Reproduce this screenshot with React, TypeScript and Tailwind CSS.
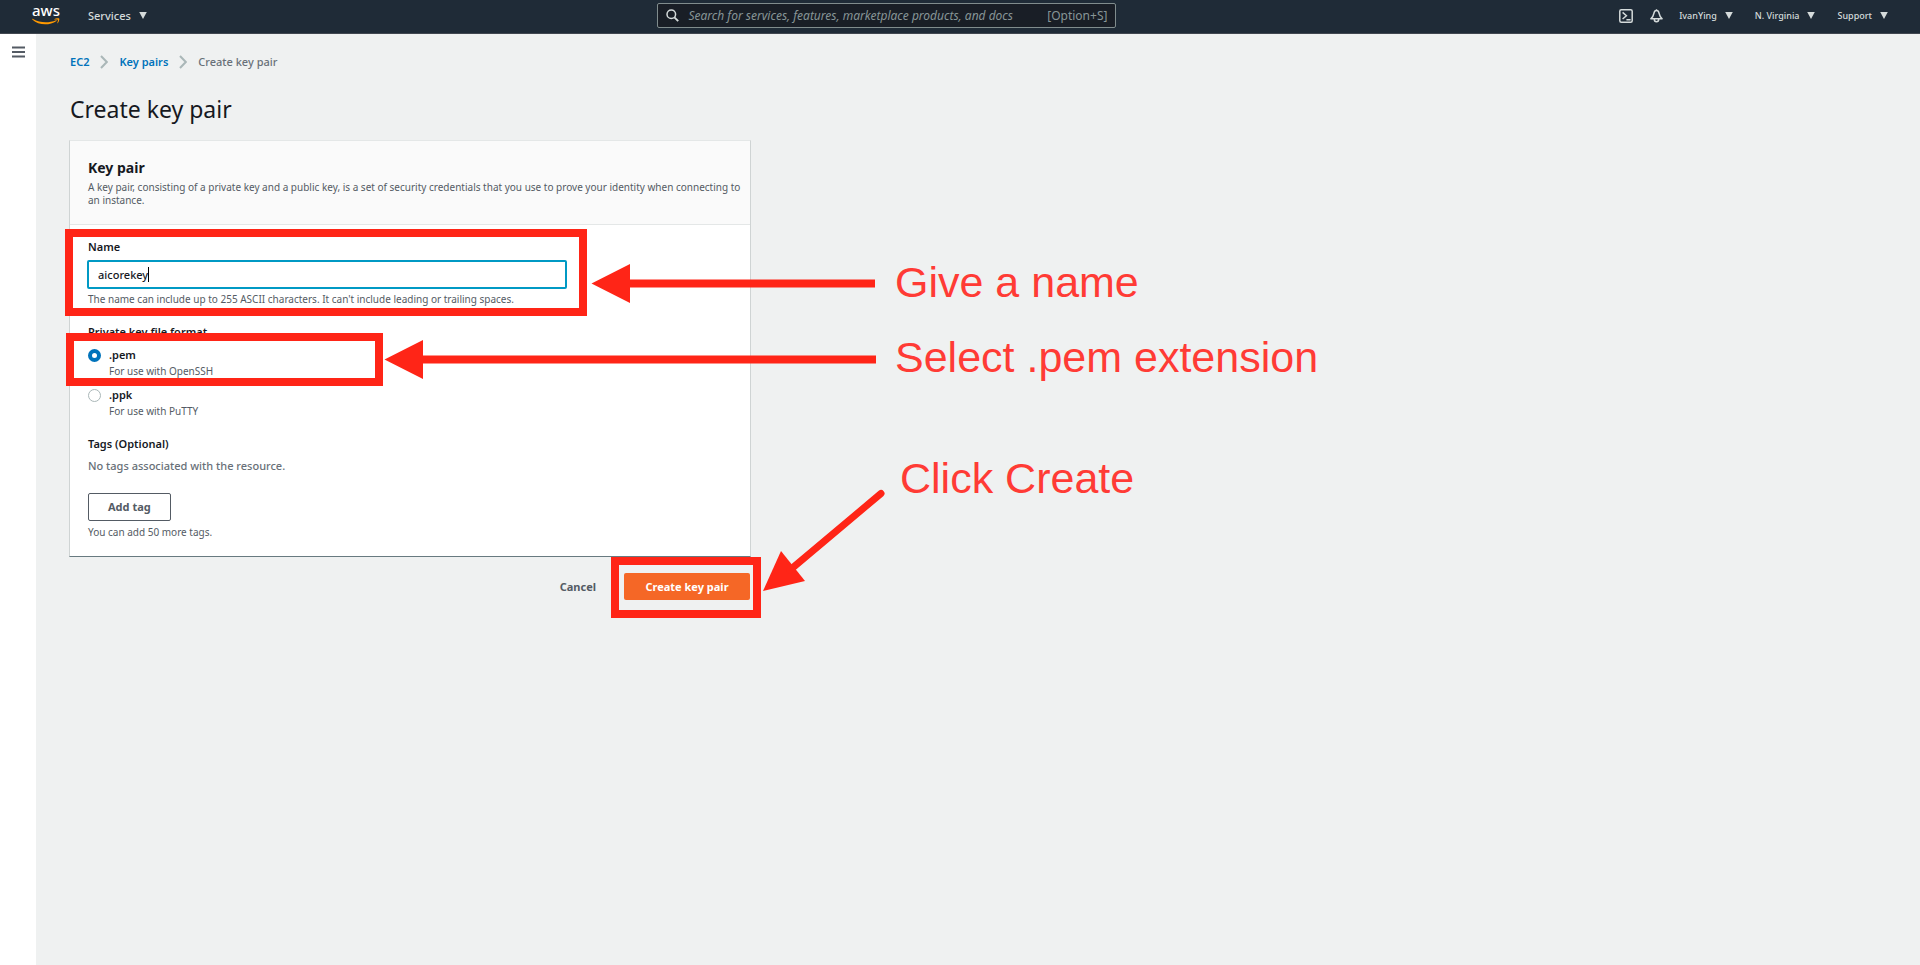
import { useState } from 'react';
import type { ReactNode } from 'react';

function Caret() {
  return (
    <svg width="8" height="7" viewBox="0 0 8 7" aria-hidden="true" className="shrink-0">
      <path d="M0.2 0H7.8L4 7Z" fill="currentColor" />
    </svg>
  );
}

function NavItem({ children }: { children: ReactNode }) {
  return (
    <button type="button" className="flex items-center gap-2 text-[9px] leading-4 font-medium">
      {children}
      <Caret />
    </button>
  );
}

function AwsLogo() {
  return (
    <span className="flex w-7 flex-col items-center text-white">
      <span className="-mt-1.5 text-[15px] leading-4 font-medium">aws</span>
      <svg width="28" height="7" viewBox="0 0 28 7" aria-hidden="true" fill="#f90">
        <path d="M0.3 1.1C0.4 0.8 0.7 0.8 1 1C7.8 4.9 16.5 5.4 24 2.2C24.6 2 25 2.5 24.5 2.9C17.5 7.8 6.5 7.4 0.5 1.7C0.3 1.5 0.2 1.3 0.3 1.1Z" />
        <path d="M22.3 1.3C23.7 0.2 26.7 0.1 27.2 0.6C27.7 1.2 27 4 25.7 5.2C25.4 5.4 25.2 5.3 25.3 5C25.7 4 26.2 2.3 25.8 1.8C25.4 1.4 23.6 1.5 22.6 1.6C22.2 1.7 22.1 1.5 22.3 1.3Z" />
      </svg>
    </span>
  );
}

function Header() {
  return (
    <header className="grid h-[34px] grid-cols-[9fr_459px_11fr] border-b border-[#414750] bg-[#1f2b37] text-[#d5dbdb]">
      <div className="flex items-center gap-7 pl-8">
        <a href="#home" aria-label="AWS home">
          <AwsLogo />
        </a>
        <button type="button" className="flex items-center gap-2 pb-0.5 text-[11px] leading-4 font-medium">
          Services
          <Caret />
        </button>
      </div>
      <div className="flex items-center pb-0.5">
        <label className="flex h-[25px] w-full items-center gap-[9px] rounded-xs border border-[#808c8d] bg-[#191e26] px-2">
          <svg width="13" height="13" viewBox="0 0 13 13" fill="none" stroke="#d5dbdb" strokeWidth="1.5" aria-hidden="true">
            <circle cx="5.3" cy="5.3" r="4.3" />
            <path d="M8.4 8.4L12.2 12.2" strokeWidth="1.9" />
          </svg>
          <input
            type="search"
            aria-label="Search"
            placeholder="Search for services, features, marketplace products, and docs"
            className="min-w-0 flex-1 bg-transparent text-[12px] leading-4 text-[#d5dbdb] outline-none placeholder:text-[#879596] placeholder:italic"
          />
          <span className="text-[12px] leading-4 text-[#879596]">[Option+S]</span>
        </label>
      </div>
      <div className="flex items-center justify-end pr-8 pb-0.5">
        <div className="flex items-center gap-[17px]">
          <button type="button" aria-label="CloudShell">
            <svg width="14" height="14" viewBox="0 0 14 14" fill="none" stroke="currentColor" strokeWidth="1.5" aria-hidden="true">
              <rect x="0.8" y="0.8" width="12.4" height="12.4" rx="1.5" />
              <path d="M3.6 3.4L7.4 6.7L3.6 10M7.4 10.8H11.6" />
            </svg>
          </button>
          <button type="button" aria-label="Notifications">
            <svg width="13" height="14" viewBox="0 0 13 14" fill="none" stroke="currentColor" strokeWidth="1.5" strokeLinejoin="round" aria-hidden="true">
              <path d="M6.5 0.2V1.8M6.5 1.6C5 1.6 4.2 2.7 3.9 4.4C3.5 6.6 2.6 8.2 0.9 9.8H12.1C10.4 8.2 9.5 6.6 9.1 4.4C8.8 2.7 8 1.6 6.5 1.6ZM4.3 10.3C4.3 13.7 8.7 13.7 8.7 10.3" />
            </svg>
          </button>
        </div>
        <nav aria-label="Account" className="flex items-center gap-[22px] pl-4">
          <NavItem>IvanYing</NavItem>
          <NavItem>N. Virginia</NavItem>
          <NavItem>Support</NavItem>
        </nav>
      </div>
    </header>
  );
}

function Chevron() {
  return (
    <svg width="8" height="14" viewBox="0 0 8 14" fill="none" stroke="#aab7b8" strokeWidth="2" aria-hidden="true">
      <path d="M1 1L6.8 7L1 13" />
    </svg>
  );
}

function RadioOption({
  value,
  hint,
  selected,
  onSelect,
}: {
  value: string;
  hint: string;
  selected: string;
  onSelect: (v: string) => void;
}) {
  return (
    <label className="flex gap-2">
      <input
        type="radio"
        name="format"
        value={value}
        checked={selected === value}
        onChange={() => onSelect(value)}
        className="mt-0.5 size-[13px] appearance-none rounded-full border border-[#aab7b8] bg-white checked:border-4 checked:border-[#0073bb]"
      />
      <span className="flex flex-col">
        <span className="text-[11px] leading-4 font-semibold">{value}</span>
        <span className="text-[10px] leading-4 text-[#545b64]">{hint}</span>
      </span>
    </label>
  );
}

function Annotations() {
  return (
    <div className="pointer-events-none absolute inset-0 overflow-hidden font-['Liberation_Sans',Arial,sans-serif] text-[43px] leading-[50px] whitespace-nowrap text-[#ff3b35]">
      <div className="absolute top-[229px] left-[65px] h-[87px] w-[522px] border-8 border-[#ff2517]" />
      <div className="absolute top-[333px] left-[66px] h-[53px] w-[317px] border-8 border-[#ff2517]" />
      <div className="absolute top-[557px] left-[611px] h-[61px] w-[150px] border-8 border-[#ff2517]" />
      <svg width="900" height="640" viewBox="0 0 900 640" fill="#ff2517" className="absolute top-0 left-0" aria-hidden="true">
        <path d="M591.5 283.5L630 264V279.5H875V287.5H630V303Z" />
        <path d="M384.5 359.5L423 340V355.5H876V363.5H423V379Z" />
        <path d="M763 591L781 551L805 581Z" />
        <path d="M790 570L881 493.5" stroke="#ff2517" strokeWidth="7" strokeLinecap="round" />
      </svg>
      <p className="absolute top-[257px] left-[895px]">Give a name</p>
      <p className="absolute top-[332px] left-[895px]">Select .pem extension</p>
      <p className="absolute top-[453px] left-[900px]">Click Create</p>
    </div>
  );
}

export default function App() {
  const [name, setName] = useState('aicorekey');
  const [format, setFormat] = useState('.pem');

  return (
    <div className="relative flex min-h-screen flex-col bg-[#eff1f1] font-['Noto_Sans','Open_Sans',sans-serif] text-[#16191f]">
      <Header />
      <div className="flex flex-1">
        <aside className="w-9 bg-white pt-3 pl-3">
          <button type="button" aria-label="Open navigation" className="block">
            <svg width="13" height="12" viewBox="0 0 13 12" stroke="#545b64" strokeWidth="1.8" aria-hidden="true">
              <path d="M0 1.5H13M0 6H13M0 10.5H13" />
            </svg>
          </button>
        </aside>
        <main className="flex-1 pt-5 pl-[34px]">
          <nav aria-label="Breadcrumb" className="flex items-center gap-[11px] text-[11px] leading-4 font-semibold">
            <a href="#ec2" className="text-[#0073bb]">EC2</a>
            <Chevron />
            <a href="#key-pairs" className="text-[#0073bb]">Key pairs</a>
            <Chevron />
            <span className="font-medium text-[#687078]">Create key pair</span>
          </nav>
          <h1 className="mt-[23px] text-[23px] leading-8">Create key pair</h1>
          <form className="mt-[15px] w-[681px]" onSubmit={(e) => e.preventDefault()}>
            <section className="-ml-px border-x border-t border-b border-x-[#cfd4d4] border-t-[#e4e7e7] border-b-[#687a80] bg-white">
              <div className="border-b border-[#e4e7e7] bg-[#fafafa] pt-[17px] pr-2 pb-[17px] pl-[18px]">
                <h2 className="text-[14px] leading-5 font-bold">Key pair</h2>
                <p className="mt-[3px] text-[10px] leading-[13px] text-[#545b64]">
                  A key pair, consisting of a private key and a public key, is a set of security credentials that you use to prove your identity when connecting to an instance.
                </p>
              </div>
              <div className="px-[18px] pt-[14px] pb-4">
                <label htmlFor="key-name" className="block text-[11px] leading-4 font-semibold">Name</label>
                <div className="mt-[5px] -ml-px flex h-[29px] w-[480px] items-center rounded-xs border-2 border-[#0099c4] bg-white pl-[9px]">
                  <input
                    id="key-name"
                    type="text"
                    value={name}
                    onChange={(e) => setName(e.target.value)}
                    className="field-sizing-content bg-transparent text-[11px] leading-4 font-medium caret-transparent outline-none"
                  />
                  <span className="h-[15px] w-px bg-black" />
                </div>
                <p className="mt-0.5 text-[10px] leading-4 text-[#545b64]">
                  The name can include up to 255 ASCII characters. It can't include leading or trailing spaces.
                </p>
                <fieldset className="mt-[17px]">
                  <legend className="text-[11px] leading-4 font-semibold">Private key file format</legend>
                  <div className="mt-[7px] flex flex-col gap-2">
                    <RadioOption value=".pem" hint="For use with OpenSSH" selected={format} onSelect={setFormat} />
                    <RadioOption value=".ppk" hint="For use with PuTTY" selected={format} onSelect={setFormat} />
                  </div>
                </fieldset>
                <h3 className="mt-[17px] text-[11px] leading-4 font-semibold">Tags (Optional)</h3>
                <p className="mt-1.5 text-[11px] leading-4 font-medium text-[#687078]">No tags associated with the resource.</p>
                <button type="button" className="mt-[19px] flex h-7 items-center rounded-xs border border-[#545b64] px-[19px] text-[11px] leading-4 font-bold text-[#545b64]">
                  Add tag
                </button>
                <p className="mt-[3px] text-[10px] leading-4 text-[#545b64]">You can add 50 more tags.</p>
              </div>
            </section>
            <div className="mt-4 flex items-center justify-end gap-7 pr-px text-[11px] leading-4 font-bold">
              <button type="button" className="text-[#545b64]">Cancel</button>
              <button type="submit" className="flex h-[27px] w-[126px] items-center justify-center rounded-xs bg-[#f56726] text-white">
                Create key pair
              </button>
            </div>
          </form>
        </main>
      </div>
      <Annotations />
    </div>
  );
}
